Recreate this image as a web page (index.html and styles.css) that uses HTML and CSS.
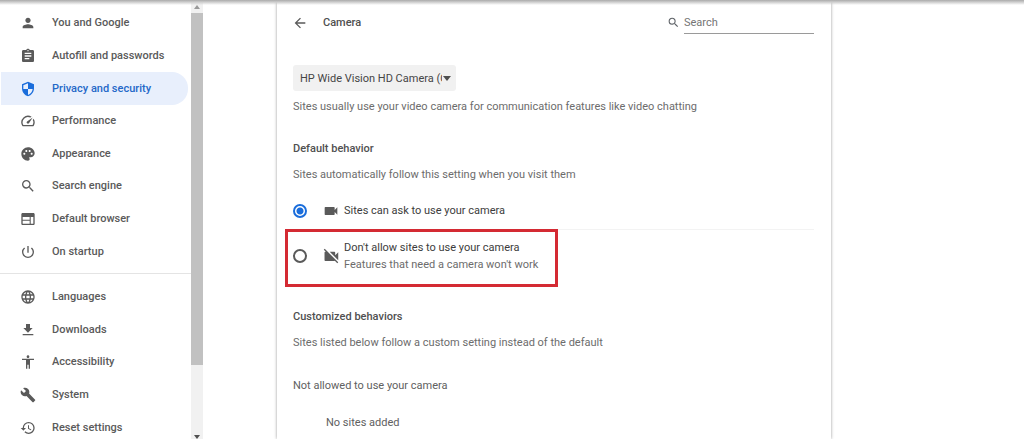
FILE: index.html
```html
<!DOCTYPE html>
<html lang="en">
<head>
<meta charset="utf-8">
<title>Settings - Camera</title>
<link rel="stylesheet" href="styles.css">
</head>
<body>
<div class="page">
  <aside class="sidebar">
    <nav class="menu">
      <div class="group group-main">
        <a class="item" href="#you"><svg class="icon" viewBox="0 0 24 24"><path d="M12 12c2.21 0 4-1.79 4-4s-1.79-4-4-4-4 1.79-4 4 1.79 4 4 4zm0 2c-2.67 0-8 1.34-8 4v2h16v-2c0-2.660-5.330-4-8-4z"/></svg>You and Google</a>
        <a class="item" href="#autofill"><svg class="icon" viewBox="0 0 24 24"><path d="M19 3h-4.180C14.400 1.840 13.300 1 12 1c-1.300 0-2.400.84-2.820 2H5c-1.100 0-2 .9-2 2v14c0 1.100.9 2 2 2h14c1.100 0 2-.9 2-2V5c0-1.100-.9-2-2-2zm-7 0c.55 0 1 .45 1 1s-.45 1-1 1-1-.45-1-1 .45-1 1-1zm2 14H7v-2h7v2zm3-4H7v-2h10v2zm0-4H7V7h10v2z"/></svg>Autofill and passwords</a>
        <a class="item selected" href="#privacy" aria-current="page"><svg class="icon" viewBox="0 0 24 24"><path d="M12 1L3 5v6c0 5.550 3.840 10.740 9 12 5.160-1.260 9-6.450 9-12V5l-9-4zm0 10.990h7c-.53 4.120-3.280 7.790-7 8.940V12H5V6.300l7-3.110v8.800z"/></svg>Privacy and security</a>
        <a class="item" href="#performance"><svg class="icon" viewBox="0 0 24 24"><path d="M20.380 8.570l-1.230 1.850a8 8 0 0 1-.22 7.580H5.070A8 8 0 0 1 15.580 6.850l1.850-1.230A10 10 0 0 0 3.350 19a2 2 0 0 0 1.720 1h13.850a2 2 0 0 0 1.740-1 10 10 0 0 0-.27-10.440zM10.590 15.410a2 2 0 0 0 2.830 0l5.660-8.490-8.490 5.660a2 2 0 0 0 0 2.830z"/></svg>Performance</a>
        <a class="item" href="#appearance"><svg class="icon" viewBox="0 0 24 24"><path d="M12 2C6.490 2 2 6.490 2 12s4.490 10 10 10c1.380 0 2.500-1.120 2.500-2.500 0-.61-.23-1.200-.64-1.670-.08-.1-.13-.21-.13-.33 0-.28.22-.5.5-.5H16c3.310 0 6-2.690 6-6 0-4.960-4.490-9-10-9zM6.500 13C5.670 13 5 12.330 5 11.500S5.670 10 6.500 10 8 10.670 8 11.500 7.330 13 6.500 13zm3-4C8.670 9 8 8.330 8 7.500S8.670 6 9.500 6s1.500.67 1.500 1.500S10.330 9 9.500 9zm5 0c-.83 0-1.500-.67-1.500-1.500S13.670 6 14.500 6s1.500.67 1.500 1.500S15.330 9 14.500 9zm3 4c-.83 0-1.500-.67-1.500-1.500s.67-1.500 1.500-1.500 1.500.67 1.500 1.500-.67 1.500-1.500 1.500z"/></svg>Appearance</a>
        <a class="item" href="#search"><svg class="icon" viewBox="0 0 24 24"><path d="M15.500 14h-.79l-.28-.27A6.470 6.470 0 0 0 16 9.500 6.500 6.500 0 1 0 9.500 16c1.610 0 3.090-.59 4.230-1.570l.27.28v.79l5 4.990L20.490 19l-4.990-5zm-6 0C7.010 14 5 11.990 5 9.500S7.010 5 9.500 5 14 7.010 14 9.500 11.990 14 9.500 14z"/></svg>Search engine</a>
        <a class="item" href="#browser"><svg class="icon" viewBox="0 0 24 24"><path d="M20 3H4c-1.100 0-2 .9-2 2v14c0 1.100.9 2 2 2h16c1.100 0 2-.9 2-2V5c0-1.100-.9-2-2-2zm-5.500 16H4v-4.200h10.500V19zm0-5.800H4V9h10.500v4.200zM20 19h-3.900V9H20v10z"/></svg>Default browser</a>
        <a class="item" href="#startup"><svg class="icon" viewBox="0 0 24 24"><path d="M13 3h-2v10h2V3zm4.830 2.170l-1.420 1.420A6.920 6.920 0 0 1 19 12c0 3.870-3.130 7-7 7s-7-3.130-7-7c0-2.190 1.010-4.140 2.580-5.420L6.170 5.170A8.930 8.930 0 0 0 3 12a9 9 0 0 0 18 0c0-2.740-1.230-5.180-3.170-6.830z"/></svg>On startup</a>
      </div>
      <hr class="separator">
      <div class="group group-advanced">
        <a class="item" href="#languages"><svg class="icon" viewBox="0 0 24 24"><path d="M11.990 2C6.470 2 2 6.480 2 12s4.470 10 9.990 10C17.520 22 22 17.520 22 12S17.520 2 11.990 2zm6.930 6h-2.950a15.650 15.650 0 0 0-1.380-3.560A8.030 8.030 0 0 1 18.920 8zM12 4.040c.83 1.200 1.480 2.530 1.910 3.960h-3.820c.43-1.430 1.080-2.760 1.910-3.960zM4.260 14C4.100 13.360 4 12.690 4 12s.1-1.360.26-2h3.380c-.08.66-.14 1.320-.14 2s.06 1.340.14 2H4.260zm.82 2h2.950c.32 1.250.78 2.450 1.380 3.560A7.990 7.990 0 0 1 5.080 16zm2.950-8H5.080a7.990 7.990 0 0 1 4.330-3.560A15.650 15.650 0 0 0 8.030 8zM12 19.960c-.83-1.200-1.480-2.530-1.910-3.960h3.820c-.43 1.430-1.080 2.760-1.910 3.960zM14.340 14H9.660c-.09-.66-.16-1.320-.16-2s.07-1.350.16-2h4.680c.09.65.16 1.320.16 2s-.07 1.340-.16 2zm.25 5.560c.6-1.110 1.060-2.310 1.380-3.560h2.950a8.030 8.030 0 0 1-4.330 3.560zM16.360 14c.08-.66.14-1.320.14-2s-.06-1.340-.14-2h3.380c.16.640.26 1.310.26 2s-.1 1.360-.26 2h-3.380z"/></svg>Languages</a>
        <a class="item" href="#downloads"><svg class="icon" viewBox="0 0 24 24"><path d="M19 9h-4V3H9v6H5l7 7 7-7zM4 18v2h16v-2H4z"/></svg>Downloads</a>
        <a class="item" href="#accessibility"><svg class="icon" viewBox="0 0 24 24"><path d="M12 2c1.100 0 2 .9 2 2s-.9 2-2 2-2-.9-2-2 .9-2 2-2zm9 7h-6v13h-2v-6h-2v6H9V9H3V7h18v2z"/></svg>Accessibility</a>
        <a class="item" href="#system"><svg class="icon" viewBox="0 0 24 24"><path d="M22.700 19l-9.100-9.100c.9-2.300.4-5-1.500-6.900-2-2-5-2.400-7.400-1.300L9 6 6 9 1.600 4.700C.4 7.100.9 10.100 2.900 12.100c1.900 1.900 4.600 2.400 6.900 1.500l9.100 9.100c.4.4 1 .4 1.400 0l2.300-2.300c.5-.4.5-1.100.1-1.400z"/></svg>System</a>
        <a class="item" href="#reset"><svg class="icon" viewBox="0 0 24 24"><path d="M13 3a9 9 0 0 0-9 9H1l3.890 3.890.07.14L9 12H6c0-3.870 3.130-7 7-7s7 3.130 7 7-3.130 7-7 7c-1.930 0-3.680-.79-4.940-2.060l-1.420 1.420A8.950 8.950 0 0 0 13 21a9 9 0 0 0 0-18zm-1 5v5l4.280 2.540.72-1.210-3.500-2.080V8H12z"/></svg>Reset settings</a>
      </div>
    </nav>
    <div class="scrollbar" aria-hidden="true">
      <span class="arrow arrow-up"></span>
      <span class="thumb"></span>
      <span class="track"></span>
      <span class="arrow arrow-down"></span>
    </div>
  </aside>

  <main class="card">
    <header class="bar">
      <button class="back" type="button" aria-label="Back"><svg class="icon" viewBox="0 0 24 24"><path d="M20 11H7.830l5.590-5.590L12 4l-8 8 8 8 1.410-1.410L7.830 13H20v-2z"/></svg></button>
      <h1 class="title">Camera</h1>
      <label class="search">
        <svg class="search-icon" viewBox="0 0 24 24"><path d="M15.500 14h-.79l-.28-.27A6.470 6.470 0 0 0 16 9.500 6.500 6.500 0 1 0 9.500 16c1.610 0 3.090-.59 4.230-1.570l.27.28v.79l5 4.990L20.490 19l-4.990-5zm-6 0C7.010 14 5 11.990 5 9.500S7.010 5 9.500 5 14 7.010 14 9.500 11.990 14 9.500 14z"/></svg>
        <input class="search-input" type="text" placeholder="Search" aria-label="Search">
      </label>
    </header>

    <div class="picker">
      <select class="select" aria-label="Camera"><option>HP Wide Vision HD Camera (C</option></select>
      <span class="caret"></span>
    </div>
    <p class="text picker-text">Sites usually use your video camera for communication features like video chatting</p>

    <h2 class="heading">Default behavior</h2>
    <p class="text">Sites automatically follow this setting when you visit them</p>

    <div class="choices">
      <label class="choice choice-allow">
        <input class="radio" type="radio" name="camera" checked>
        <span class="choice-body">
          <svg class="icon" viewBox="0 0 24 24"><path d="M17.500 10.500V7c0-.55-.45-1-1-1h-13c-.55 0-1 .45-1 1v10c0 .55.45 1 1 1h13c.55 0 1-.45 1-1v-3.500l4 4v-11l-4 4z"/></svg>
          <span class="label">Sites can ask to use your camera</span>
        </span>
      </label>
      <label class="choice choice-block">
        <input class="radio" type="radio" name="camera">
        <span class="choice-body">
          <svg class="icon" viewBox="1 1 21 21"><path d="M21 6.500l-4 4V7c0-.55-.45-1-1-1H9.820L21 17.180V6.500zM3.270 2L2 3.270 4.730 6H4c-.55 0-1 .45-1 1v10c0 .55.45 1 1 1h12c.21 0 .39-.08.54-.18L19.730 21 21 19.730 3.270 2z"/></svg>
          <span class="label">Don't allow sites to use your camera<span class="sub">Features that need a camera won't work</span></span>
        </span>
      </label>
    </div>

    <h2 class="heading">Customized behaviors</h2>
    <p class="text">Sites listed below follow a custom setting instead of the default</p>
    <h3 class="list-title">Not allowed to use your camera</h3>
    <p class="empty">No sites added</p>
  </main>
</div>
</body>
</html>
```

FILE: styles.css
```css
*, *::before, *::after { box-sizing: border-box; }

body {
  margin: 0;
  background: #fff;
  color: #5f6368;
  font: 11px/16px Roboto, sans-serif;
}

h1, h2, h3, p { margin: 0; font-size: 11px; }

.page {
  position: relative;
  display: grid;
  grid-template-columns: 203px 628fr 193fr;
  height: 100vh;
  overflow: hidden;
}

.page::before {
  content: "";
  position: absolute;
  inset: 0 0 auto;
  height: 5px;
  background: linear-gradient(#aaa, #ccc 40%, rgba(255, 255, 255, 0));
  z-index: 1;
}

.icon { width: 16px; height: 16px; flex: none; fill: #5a5a5a; }

.sidebar { display: flex; min-height: 0; }

.menu { flex: 1; padding-top: 7px; overflow: hidden; }

.group { display: grid; grid-auto-rows: 1fr; }
.group-main { height: 261px; }
.group-advanced { height: 163px; }

.item {
  display: flex;
  align-items: center;
  gap: 16px;
  margin: 0 3px 0 1px;
  padding-left: 19px;
  border-radius: 0 16px 16px 0;
  color: #5a5a5a;
  font-weight: 500;
  text-decoration: none;
}

.selected { background: #e8effc; color: #2468c8; }
.selected .icon { fill: #1a6ddb; }

.separator { margin: 5px 0 7px; border: 0; border-top: 1px solid #e4e4e4; }

.scrollbar {
  display: flex;
  flex-direction: column;
  align-items: center;
  width: 12px;
  background: #f1f1f1;
}

.thumb { flex: 352; width: 12px; background: #c1c1c1; }
.track { flex: 70; }
.arrow { border: solid transparent; border-width: 0 3px; }
.arrow-up { margin: 5px 0 4px; border-bottom: 4px solid #999; }
.arrow-down { border-top: 4px solid #505050; }

.card {
  margin-left: 74px;
  padding: 0 17px 0 16px;
  box-shadow: 0 0 3px rgba(0, 0, 0, .4);
}

.bar { display: flex; align-items: center; height: 45px; }

.back { display: flex; padding: 0; border: 0; background: none; margin-right: 15px; margin-left: -1px; }

.title { font-weight: 500; color: #505050; }

.search { display: flex; align-items: center; gap: 4px; margin-left: auto; }
.search-icon { width: 13px; height: 13px; fill: #5f6368; }
.search-input {
  width: 130px;
  height: 22px;
  padding: 0;
  border: 0;
  border-bottom: 1px solid #9a9a9a;
  background: none;
  font: inherit;
  color: #5f6368;
}
.search-input::placeholder { color: #757575; }

.picker { position: relative; width: 163px; margin-top: 20px; }

.select {
  display: block;
  width: 100%;
  height: 26px;
  padding: 1px 14px 0 7px;
  border: 0;
  border-radius: 3px;
  background: #f1f1f1;
  color: #454545;
  font: inherit;
  appearance: none;
}

.caret {
  position: absolute;
  top: 11px;
  right: 5px;
  border: 4px solid transparent;
  border-top: 5px solid #505050;
  border-bottom: 0;
  pointer-events: none;
}

.text { color: #6c6c6c; }
.picker-text { margin-top: 8px; }

.heading { margin: 26px 0 10px; font-weight: 500; color: #505050; }

.choices { margin: 9px 0 27px; }

.choice { display: flex; align-items: center; gap: 16px; }
.choice-body { display: flex; flex: 1; align-items: center; gap: 5px; align-self: stretch; }
.choice-allow { height: 38px; }
.choice-allow .choice-body { border-bottom: 1px solid #f3f3f3; }

.choice-block { position: relative; height: 52px; }
.choice-block::after {
  content: "";
  position: absolute;
  top: -1px;
  left: -8px;
  width: 273px;
  height: 58px;
  border: 3px solid #d42a33;
  pointer-events: none;
}

.radio {
  appearance: none;
  width: 14px;
  height: 14px;
  margin: 0;
  border: 2px solid #5a5a5a;
  border-radius: 50%;
}
.radio:checked { border-color: #1a6ddb; background: radial-gradient(#1a6ddb 3px, #fff 4px); }

.label { color: #3c3c3c; line-height: 17px; }
.sub { display: block; color: #6c6c6c; }

.list-title { margin-top: 27px; font-weight: 400; color: #606060; }
.empty { margin: 21px 0 0 33px; color: #606060; }
```
